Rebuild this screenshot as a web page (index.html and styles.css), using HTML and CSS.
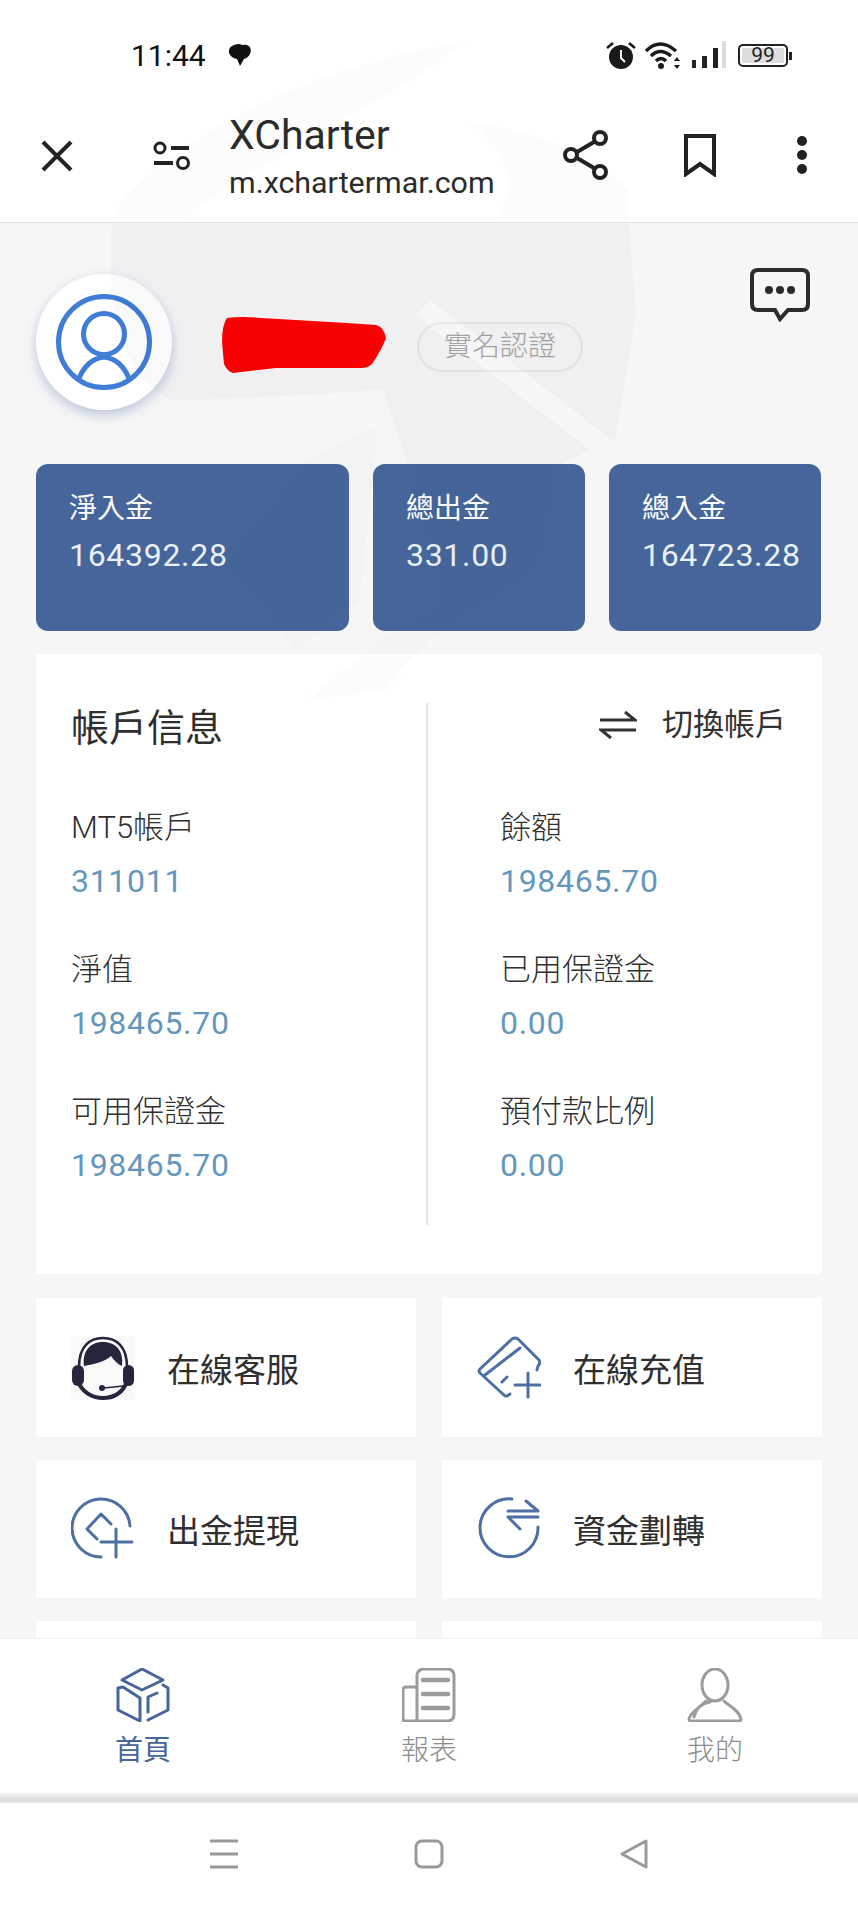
FILE: index.html
```html
<!DOCTYPE html>
<html lang="zh-Hant">
<head>
  <meta charset="UTF-8" />
  <meta name="viewport" content="width=device-width, initial-scale=1.0"/>
  <title>XCharter</title>
  <link rel="stylesheet" href="styles.css">
</head>
<body>
  <div class="app">
    <header class="browser">
      <div class="status">
        <span class="time">11:44</span>
        <svg class="ic-msg" width="24" height="24" viewBox="0 0 24 24"><path d="M6 2q5-2 8 0 4-1 7 1 3 3 1 8-2 4-6 5l-4 7-3-7Q3 15 1 10 0 4 6 2z" fill="#111"/></svg>
        <div class="status-right">
          <svg width="30" height="30" viewBox="0 0 30 30"><circle cx="15" cy="17" r="12" fill="#1a1a1a"/><path d="M15 10v8l4 4" stroke="#fff" stroke-width="2" fill="none"/><path d="M1 8l6-5M29 8l-6-5" stroke="#1a1a1a" stroke-width="2.5"/></svg>
          <svg width="36" height="30" viewBox="0 0 36 30"><path d="M1 11Q15-3 31 11M6 16q9-9 20 0M11 21q5-5 10 0" stroke="#1a1a1a" stroke-width="3.5" fill="none"/><circle cx="16" cy="26" r="3" fill="#1a1a1a"/><path d="M32 17l3 4h-6zM32 29l3-4h-6z" fill="#1a1a1a"/></svg>
          <svg width="36" height="30" viewBox="0 0 36 30"><path d="M2 20h4v8H2zM12 16h5v12h-5zM23 8h5v20h-5z" fill="#222"/><path d="M32 1h4v27h-4z" fill="#ddd"/></svg>
          <div class="battery"><span class="battery-num">99</span></div>
        </div>
      </div>
      <div class="topbar">
        <svg class="ic-close" width="34" height="34" viewBox="0 0 34 34"><path d="M3 3l28 28M31 3L3 31" stroke="#222" stroke-width="4"/></svg>
        <svg class="ic-tune" width="38" height="30" viewBox="0 0 38 30"><circle cx="7" cy="7" r="5" fill="none" stroke="#222" stroke-width="3"/><circle cx="30" cy="22" r="5.5" fill="none" stroke="#222" stroke-width="3"/><path d="M18 7h18M1 22h19" stroke="#222" stroke-width="4"/></svg>
        <div class="page-title">
          <div class="site-name">XCharter</div>
          <div class="site-url">m.xchartermar.com</div>
        </div>
        <svg class="ic-share" width="46" height="50" viewBox="0 0 46 50"><path d="M36 9L9 25l27 16" stroke="#222" stroke-width="4" fill="none"/><circle cx="37" cy="8" r="6" fill="#fff" stroke="#222" stroke-width="4"/><circle cx="8" cy="25" r="6" fill="#fff" stroke="#222" stroke-width="4"/><circle cx="37" cy="42" r="6" fill="#fff" stroke="#222" stroke-width="4"/></svg>
        <svg class="ic-mark" width="34" height="44" viewBox="0 0 34 44"><path d="M3 3h28v38L17 31 3 41z" fill="none" stroke="#222" stroke-width="4"/></svg>
        <div class="ic-dots"><i></i><i></i><i></i></div>
      </div>
    </header>

    <main class="content">
      <section class="profile">
        <div class="avatar">
          <svg width="100" height="100" viewBox="0 0 100 100"><circle cx="50" cy="50" r="45.5" fill="none" stroke="#3f7dd6" stroke-width="5"/><ellipse cx="50" cy="42" rx="20.5" ry="20.5" fill="none" stroke="#3f7dd6" stroke-width="5"/><path d="M24 89Q32 67 50 65 68 67 76 89" fill="none" stroke="#3f7dd6" stroke-width="5"/></svg>
        </div>
        <svg class="scribble" width="166" height="57" viewBox="0 0 166 57"><path d="M0 25Q0 8 5 1Q20-1 39 1L125 6 154 8Q162 10 164 21 160 32 150 47 146 51 139 51L54 51 11 56Q5 54 2 47z" fill="#fe0000"/></svg>
        <span class="verify">實名認證</span>
        <svg class="ic-chat" width="60" height="54" viewBox="0 0 60 54"><path d="M8 2h44q6 0 6 6v28q0 6-6 6H38l-8 9-5-9H8q-6 0-6-6V8q0-6 6-6z" fill="none" stroke="#2b2b2b" stroke-width="4"/><circle cx="19" cy="22" r="4" fill="#2b2b2b"/><circle cx="30" cy="22" r="4" fill="#2b2b2b"/><circle cx="41" cy="22" r="4" fill="#2b2b2b"/></svg>
      </section>

      <section class="totals">
        <div class="total-card"><div class="total-label">淨入金</div><div class="total-value">164392.28</div></div>
        <div class="total-card"><div class="total-label">總出金</div><div class="total-value">331.00</div></div>
        <div class="total-card"><div class="total-label">總入金</div><div class="total-value">164723.28</div></div>
      </section>

      <section class="info">
        <div class="info-col info-left">
          <h2 class="info-title">帳戶信息</h2>
          <div class="field"><div class="field-label">MT5帳戶</div><div class="field-value">311011</div></div>
          <div class="field"><div class="field-label">淨值</div><div class="field-value">198465.70</div></div>
          <div class="field"><div class="field-label">可用保證金</div><div class="field-value">198465.70</div></div>
        </div>
        <div class="info-col info-right">
          <div class="switch">
            <svg width="38" height="30" viewBox="0 0 38 30"><path d="M1 10h35L26 2M37 20H2l10 8" fill="none" stroke="#333" stroke-width="3"/></svg>
            <span>切換帳戶</span>
          </div>
          <div class="field"><div class="field-label">餘額</div><div class="field-value">198465.70</div></div>
          <div class="field"><div class="field-label">已用保證金</div><div class="field-value">0.00</div></div>
          <div class="field"><div class="field-label">預付款比例</div><div class="field-value">0.00</div></div>
        </div>
      </section>

      <section class="actions">
        <div class="action">
          <svg width="64" height="64" viewBox="0 0 64 64"><rect width="64" height="64" fill="#f9f9f9"/><path d="M8 31C8 10 19 2 32 2s24 8 24 29" fill="none" stroke="#25253b" stroke-width="2.5"/><path d="M13 30C11 13 21 6 32 6c13 0 21 9 19 24-5-2-8-6-11-10-6 6-17 8-27 10z" fill="#25253b"/><rect x="1" y="29" width="12" height="21" rx="6" fill="#25253b"/><rect x="52" y="29" width="11" height="21" rx="5.5" fill="#25253b"/><path d="M8 48c6 10 15 14 24 14s18-4 23-14" fill="none" stroke="#25253b" stroke-width="4"/><path d="M33 52l19-2" stroke="#25253b" stroke-width="1.5"/><circle cx="31" cy="52" r="3" fill="#25253b"/></svg>
          <span>在線客服</span>
        </div>
        <div class="action">
          <svg class="ic-act" width="64" height="64" viewBox="0 0 64 64"><path d="M33 58l-3 2-2 0L3 37q-2-2 0-4L35 3q3-2 6 0l21 21q2 3-1 6l-1 4M8 39L43 12M25 46l5-5M38 49h25M51 37v24"/></svg>
          <span>在線充值</span>
        </div>
        <div class="action">
          <svg class="ic-act" width="64" height="64" viewBox="0 0 64 64"><path d="M59 29A29 29 0 1 0 30 60M26 42L16 32 30 17l10 10M30 45h31M45 32v28"/></svg>
          <span>出金提現</span>
        </div>
        <div class="action">
          <svg class="ic-act" width="64" height="64" viewBox="0 0 64 64"><path d="M35 2A29 29 0 1 0 61 30M31 14h30L49 4M31 20h30M31 20l12 12"/></svg>
          <span>資金劃轉</span>
        </div>
        <div class="action"></div>
        <div class="action"></div>
      </section>
    </main>

    <nav class="tabs">
      <div class="tab tab-on">
        <svg width="54" height="54" viewBox="0 0 54 54"><path d="M26 1l21 11-21 10L6 12zM7 19l-5 1v22l22 11V30zM47 17l5 3v22l-20 10M32 44V29l9-4"/></svg>
        <span>首頁</span>
      </div>
      <div class="tab">
        <svg width="54" height="54" viewBox="0 0 54 54"><path d="M15 53V8q0-7 8-7h22q7 0 7 7v38q0 7-7 7H3q-2 0-2-2V22q0-3 3-3h11"/><path d="M21 12h25M21 26h25M21 40h25" stroke-width="4.5"/></svg>
        <span>報表</span>
      </div>
      <div class="tab">
        <svg width="56" height="54" viewBox="0 0 56 54"><ellipse cx="28" cy="17" rx="13" ry="16"/><path d="M19 33C14 39 3 44 2 51q0 2 2 2h48q2 0 2-2C52 42 42 38 37 33M7 49q3-13 16-15" /></svg>
        <span>我的</span>
      </div>
    </nav>
    <div class="tabs-edge"></div>

    <footer class="sysnav">
      <svg width="30" height="30" viewBox="0 0 30 30"><path d="M1 2h28M1 15h28M1 28h28" stroke="#999" stroke-width="3"/></svg>
      <svg width="30" height="30" viewBox="0 0 30 30"><rect x="2" y="2" width="26" height="26" rx="6" fill="none" stroke="#999" stroke-width="3"/></svg>
      <svg width="30" height="30" viewBox="0 0 30 30"><path d="M27 2v26L3 15z" fill="none" stroke="#999" stroke-width="3" stroke-linejoin="round"/></svg>
    </footer>

    <!-- faint logo that sits over the whole page -->
    <svg class="watermark" width="858" height="1907" viewBox="0 0 858 1907">
      <path d="M465 42C380 55 230 95 125 195L112 222H180C215 190 270 165 340 120L416 78z" opacity=".5"/>
      <path d="M470 123C540 130 600 160 629 190V222H490C520 200 510 150 470 123z" opacity=".45"/>
      <path d="M112 224H629L636 312 615 442 430 300 415 315 590 450 560 464H408L383 390C300 395 230 400 172 400 130 380 105 330 112 224z"/>
      <path d="M408 464H560L540 570 430 640 385 690 306 700 395 630 440 600z" opacity=".6"/>
      <path d="M378 427L306 460 220 560 296 650 360 600z" opacity=".5"/>
    </svg>
  </div>
</body>
</html>
```

FILE: styles.css
```css
* { box-sizing: border-box; }
html, body { margin: 0; padding: 0; }
body { font-family: Roboto, "Noto Sans CJK TC", sans-serif; background: #fff; color: #2f2f2f; }
.app { position: relative; width: 858px; height: 1907px; display: flex; flex-direction: column; overflow: hidden; }

.browser { background: #fff; border-bottom: 1px solid #e2e2e2; height: 223px; flex: none; }
.status { height: 110px; display: flex; align-items: center; padding-left: 131px; padding-right: 70px; }
.time { font-size: 30px; color: #111; width: 97px; }
.status-right { margin-left: auto; display: flex; align-items: center; gap: 9px; }
.battery { position: relative; width: 50px; height: 23px; border: 2px solid #222; border-radius: 5px; margin-left: 3px; background: #ddd; box-shadow: inset 0 0 0 2px #fff; text-align: center; }
.battery::after { content: ""; position: absolute; right: -6px; top: 6px; width: 3px; height: 8px; background: #222; }
.battery-num { font-size: 21px; line-height: 19px; display: block; color: #222; }

.topbar { height: 112px; display: flex; align-items: center; padding-bottom: 24px; }
.ic-close { margin-left: 40px; margin-top: 4px; flex: none; }
.ic-tune { margin-left: 79px; margin-top: 4px; flex: none; }
.page-title { margin-left: 38px; width: 335px; margin-top: 4px; }
.site-name { font-size: 41px; line-height: 50px; color: #2b2b2b; }
.site-url { font-size: 30.4px; line-height: 40px; margin-top: 3px; color: #2b2b2b; white-space: nowrap; }
.ic-share { margin-left: -1px; margin-top: 2px; flex: none; }
.ic-mark { margin-left: 74px; margin-top: 2px; flex: none; }
.ic-dots { margin-left: 80px; margin-top: 2px; display: flex; flex-direction: column; gap: 4px; }
.ic-dots i { width: 10px; height: 10px; background: #222; border-radius: 50%; }

.content { flex: 1; overflow: hidden; background: #f6f6f7; padding: 51px 36px 0; }

.profile { display: flex; align-items: center; height: 136px; }
.avatar { width: 136px; height: 136px; border-radius: 50%; background: #fff; box-shadow: 0 5px 12px rgba(80,110,170,.35); display: flex; align-items: center; justify-content: center; flex: none; }
.scribble { margin-left: 50px; margin-top: 6px; flex: none; }
.verify { margin-left: 29px; margin-top: 10px; height: 50px; padding: 0 25px; border: 2px solid #e8e8e8; border-radius: 25px; font-size: 28px; line-height: 46px; font-weight: 300; color: #a4a4a4; white-space: nowrap; }
.ic-chat { margin-left: auto; margin-right: 12px; align-self: flex-start; margin-top: -6px; flex: none; }

.totals { display: grid; grid-template-columns: 313px 212px 212px; gap: 24px; margin-top: 54px; }
.total-card { height: 167px; background: #46659a; border-radius: 12px; padding: 23px 0 0 33px; color: #fff; }
.total-label { font-size: 28px; line-height: 44px; }
.total-value { font-size: 32px; line-height: 44px; margin-top: 2px; letter-spacing: .7px; color: #eaf0f7; white-space: nowrap; }

.info { display: grid; grid-template-columns: 392px 1fr; background: #fff; height: 620px; margin-top: 23px; padding: 49px 0; }
.info-col { height: 522px; }
.info-left { border-right: 2px solid #e6e6e6; padding-left: 35px; }
.info-right { padding-left: 72px; padding-right: 36px; }
.info-title { margin: 0 0 53px; font-size: 38px; line-height: 50px; font-weight: 400; color: #2f2f2f; }
.switch { display: flex; justify-content: flex-end; gap: 25px; height: 50px; margin-bottom: 53px; font-size: 31px; line-height: 44px; color: #333; }
.switch svg { margin-top: 7px; }
.field { margin-bottom: 45px; }
.field-label { font-size: 31px; line-height: 44px; font-weight: 300; color: #2f2f2f; }
.field-value { font-size: 32px; line-height: 44px; margin-top: 9px; letter-spacing: .7px; color: #6497bd; }

.actions { display: grid; grid-template-columns: 380px 380px; grid-template-rows: 139px 138px 139px; gap: 23px 26px; margin-top: 24px; }
.action { background: #fff; display: flex; align-items: center; padding-left: 35px; gap: 32px; font-size: 33px; color: #2f2f2f; }
.ic-act { fill: none; stroke: #4d6fa3; stroke-width: 3; stroke-linecap: round; stroke-linejoin: round; }

.tabs { flex: none; height: 155px; background: #fff; display: grid; grid-template-columns: repeat(3, 286px); border-top: 1px solid #f0f0f0; }
.tab { display: flex; flex-direction: column; align-items: center; padding-top: 29px; font-size: 28px; line-height: 40px; font-weight: 300; color: #8c8c8c; }
.tab svg { fill: none; stroke: #9b9b9b; stroke-width: 3; margin-bottom: 9px; stroke-linejoin: round; stroke-linecap: round; }
.tab-on { color: #46659a; font-weight: 400; }
.tab-on svg { stroke: #46659a; }
.tabs-edge { flex: none; height: 10px; background: linear-gradient(#f2f2f2, #ddd 70%, #e8e8e8); }

.sysnav { flex: none; height: 104px; background: #fff; display: flex; justify-content: center; align-items: center; gap: 175px; padding-bottom: 3px; }

.watermark { position: absolute; left: 0; top: 0; pointer-events: none; fill: rgba(40,40,70,.026); }
```
